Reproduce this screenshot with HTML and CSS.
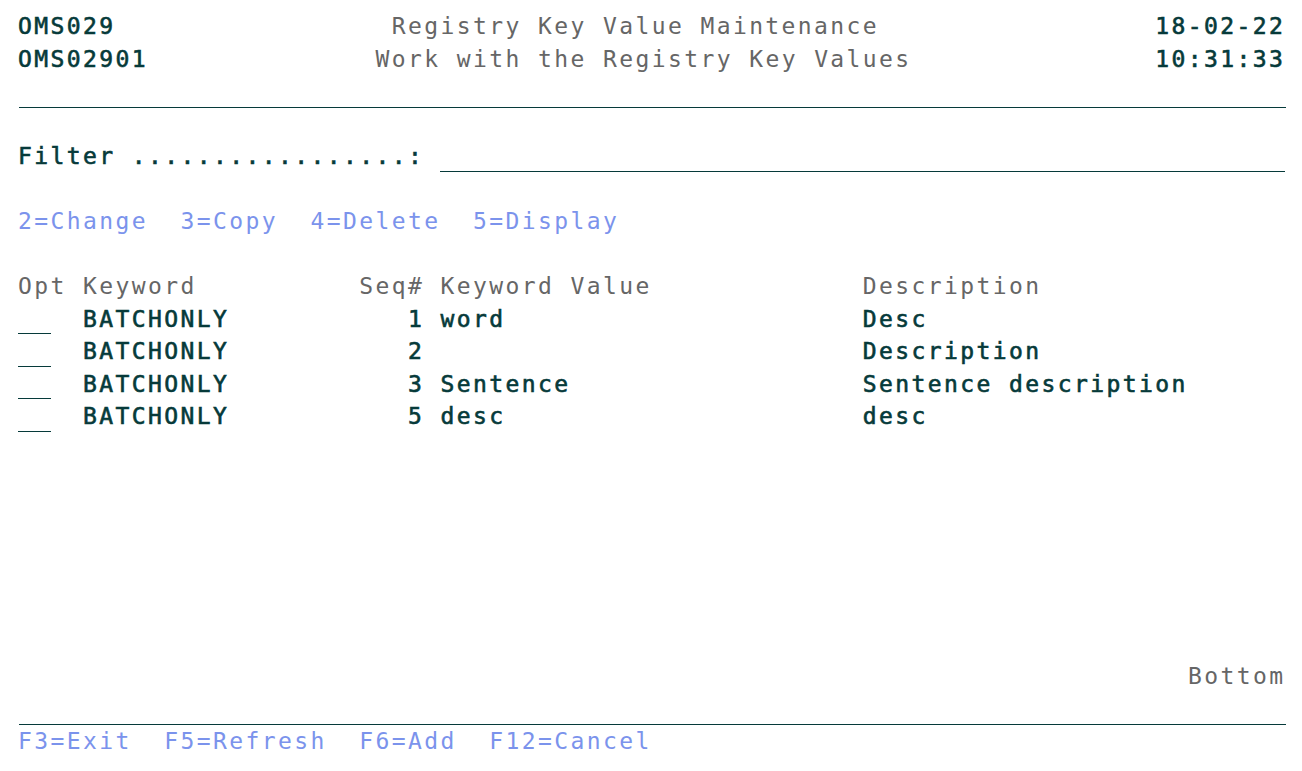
FILE: index.html
```html
<!DOCTYPE html>
<html lang="en">
<head>
  <meta charset="UTF-8">
  <title>OMS029 - Registry Key Value Maintenance</title>
  <link rel="stylesheet" href="styles.css">
</head>
<body>
  <div class="screen">
    <!-- header -->
    <div class="row"><span class="out">OMS029</span>                 <span class="lbl">Registry Key Value Maintenance</span>                 <span class="out">18-02-22</span></div>
    <div class="row"><span class="out">OMS02901</span>              <span class="lbl">Work with the Registry Key Values</span>               <span class="out">10:31:33</span></div>
    <div class="row rule"></div>
    <div class="row"></div>

    <!-- filter -->
    <div class="row"><span class="out">Filter .................:</span> <span class="field filter-field"></span></div>
    <div class="row"></div>

    <!-- options -->
    <div class="row opts">2=Change  3=Copy  4=Delete  5=Display</div>
    <div class="row"></div>

    <!-- subfile -->
    <div class="row"><span class="lbl">Opt Keyword          Seq# Keyword Value             Description</span></div>
    <div class="row"><span class="field opt-field"></span>  <span class="out">BATCHONLY           1 word                      Desc</span></div>
    <div class="row"><span class="field opt-field"></span>  <span class="out">BATCHONLY           2                           Description</span></div>
    <div class="row"><span class="field opt-field"></span>  <span class="out">BATCHONLY           3 Sentence                  Sentence description</span></div>
    <div class="row"><span class="field opt-field"></span>  <span class="out">BATCHONLY           5 desc                      desc</span></div>
    <div class="row"></div>
    <div class="row"></div>
    <div class="row"></div>
    <div class="row"></div>
    <div class="row"></div>
    <div class="row"></div>
    <div class="row"></div>
    <div class="row more"><span class="lbl">Bottom</span></div>
    <div class="row rule"></div>

    <!-- function keys -->
    <div class="row opts">F3=Exit  F5=Refresh  F6=Add  F12=Cancel</div>
  </div>
</body>
</html>
```

FILE: styles.css
```css
:root { --cw: 16.25px; --rh: 32.5px; }
body { margin: 0; background: #fff; }
.screen {
  width: calc(var(--cw) * 78); padding: 10px 0 0 18px;
  font-family: "DejaVu Sans Mono", "Liberation Mono", monospace; font-size: 23px; letter-spacing: 2.4px;
}
.row { height: var(--rh); line-height: var(--rh); white-space: pre; box-sizing: border-box; }
.rule { border-bottom: 1px solid #063a3a; margin-left: 1px; }
.out { color: #063a3a; -webkit-text-stroke: 0.6px #063a3a; }
.lbl { color: #666; }
.opts { color: #7b93ec; }
.more { text-align: right; }
.field { display: inline-block; vertical-align: top; height: calc(var(--rh) - 1px); border-bottom: 1px solid #063a3a; box-sizing: border-box; }
.filter-field { width: calc(var(--cw) * 52); }
.opt-field { width: calc(var(--cw) * 2); }
```
